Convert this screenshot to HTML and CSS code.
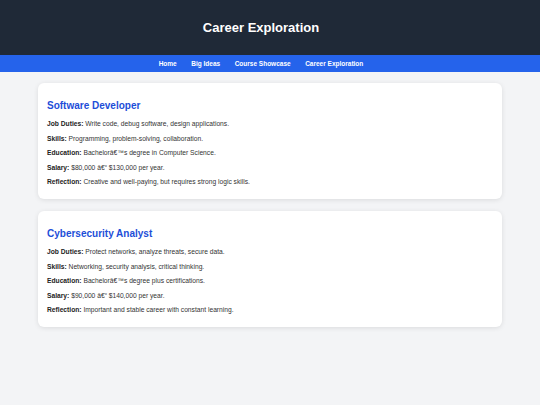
FILE: index.html
```html
<!DOCTYPE html>
<html lang="en">
<head>
    <meta charset="UTF-8">
    <meta name="viewport" content="width=device-width, initial-scale=1.0">
    <title>Career Exploration</title>
    <link rel="stylesheet" href="styles.css">
</head>
<body>
    <header class="site-header">
        <h1>Career Exploration</h1>
    </header>

    <nav class="site-nav">
        <a href="#">Home</a>
        <a href="#">Big Ideas</a>
        <a href="#">Course Showcase</a>
        <a href="#">Career Exploration</a>
    </nav>

    <main class="content">
        <section class="career-card">
            <h2>Software Developer</h2>
            <p><strong>Job Duties:</strong> Write code, debug software, design applications.</p>
            <p><strong>Skills:</strong> Programming, problem-solving, collaboration.</p>
            <p><strong>Education:</strong> Bachelorâ€™s degree in Computer Science.</p>
            <p><strong>Salary:</strong> $80,000 â€“ $130,000 per year.</p>
            <p><strong>Reflection:</strong> Creative and well-paying, but requires strong logic skills.</p>
        </section>

        <section class="career-card">
            <h2>Cybersecurity Analyst</h2>
            <p><strong>Job Duties:</strong> Protect networks, analyze threats, secure data.</p>
            <p><strong>Skills:</strong> Networking, security analysis, critical thinking.</p>
            <p><strong>Education:</strong> Bachelorâ€™s degree plus certifications.</p>
            <p><strong>Salary:</strong> $90,000 â€“ $140,000 per year.</p>
            <p><strong>Reflection:</strong> Important and stable career with constant learning.</p>
        </section>
    </main>
</body>
</html>
```

FILE: styles.css
```css
* {
    margin: 0;
    padding: 0;
    box-sizing: border-box;
}

body {
    font-family: "Liberation Sans", Arial, sans-serif;
    background: #f3f4f6;
    color: #333;
    min-height: 100vh;
}

.site-header {
    background: #1f2937;
    color: white;
    height: 55px;
    padding-right: 18px;
    display: flex;
    align-items: center;
    justify-content: center;
}

.site-header h1 {
    font-size: 13px;
    font-weight: 700;
}

.site-nav {
    background: #2563eb;
    height: 17px;
    padding-right: 18px;
    display: flex;
    align-items: center;
    justify-content: center;
    gap: 14.5px;
}

.site-nav a {
    color: white;
    text-decoration: none;
    font-size: 6.5px;
    font-weight: 700;
}

.content {
    padding: 11px 38px;
    display: flex;
    flex-direction: column;
    gap: 12px;
}

.career-card {
    background: white;
    border-radius: 6px;
    padding: 17px 9px 6px;
    box-shadow: 0 1px 5px rgba(0, 0, 0, 0.1);
    height: 116px;
}

.career-card h2 {
    color: #1d4ed8;
    font-size: 10px;
    font-weight: 700;
    margin-bottom: 6px;
}

.career-card p {
    font-size: 6.7px;
    line-height: 14.5px;
}

.career-card strong {
    color: #222;
}
```
